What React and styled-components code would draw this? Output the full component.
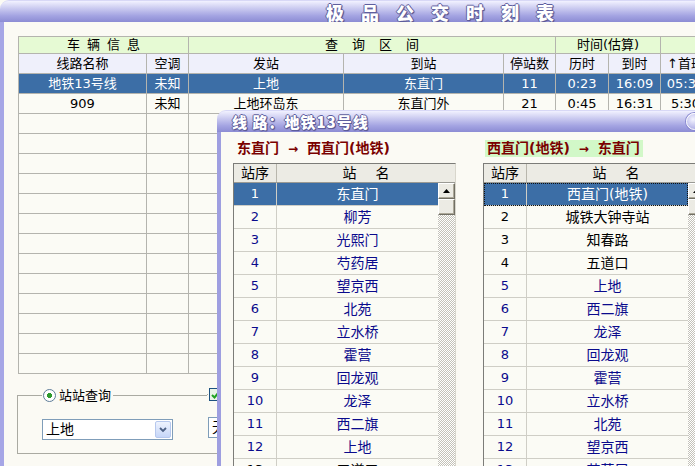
import React from "react";
import styled, { createGlobalStyle } from "styled-components";

const GlobalStyle = createGlobalStyle`
  html, body {
    margin: 0;
    padding: 0;
    overflow: hidden;
  }
  body {
    background: #fbfaf4;
    font-family: "DejaVu Sans", "Noto Sans CJK SC", sans-serif;
  }
`;

const FONT = `"DejaVu Sans", "Noto Sans CJK SC", sans-serif`;

// ---------- window chrome ----------

const Desktop = styled.div`
  position: relative;
  width: 695px;
  height: 466px;
  overflow: hidden;
`;

const MainWindow = styled.div`
  width: 880px;
  height: 466px;
  display: flex;
  flex-direction: column;
`;

const TitleBar = styled.div`
  flex: none;
  height: 22px;
  box-sizing: border-box;
  display: flex;
  align-items: center;
  justify-content: ${(p) => (p.$left ? "space-between" : "center")};
  padding: ${(p) => (p.$left ? "0 14px 0 15px" : "0")};
  border-radius: 9px 9px 0 0;
  border-top: 1px solid #d8d8f6;
  background: linear-gradient(#f2f2ff 0%, #d0d0f2 30%, #a4a4e2 70%, #8c8cd4 100%);
`;

const TitleText = styled.span`
  color: #fff;
  font-family: "Noto Sans CJK SC", sans-serif;
  font-weight: 900;
  font-size: ${(p) => p.$size}px;
  letter-spacing: ${(p) => p.$ls}px;
  margin-right: -${(p) => p.$ls}px;
  line-height: 1;
  white-space: pre;
  text-shadow: 1px 0 0 #5e5e9e, -1px 0 0 #5e5e9e, 0 1px 0 #5e5e9e,
    0 -1px 0 #5e5e9e, 1px 1px 1px #46467f;
`;

const CloseButton = styled.span`
  flex: none;
  width: 17px;
  height: 17px;
  border-radius: 50%;
  box-sizing: border-box;
  border: 1px solid #ffffff;
  background: radial-gradient(circle at 40% 35%, #f4f4ff, #b4b4e8 70%, #9494d4);
  box-shadow: 0 0 0 1px #8a8ad0;
`;

const MainBody = styled.div`
  flex: 1;
  border-left: 4px solid #a6a6e6;
  background: #fbfaf4;
  padding: 14px 0 0 14px;
`;

// ---------- main grid ----------

const Grid = styled.table`
  border-collapse: collapse;
  table-layout: fixed;
  width: 842px;
  border: 1px solid #6e6e6e;
  background: #fbfbf5;
  font-family: ${FONT};
  font-size: 13px;
`;

const Row = styled.tr`
  height: ${(p) => p.$h}px;
  background: ${(p) =>
    p.$kind === "group"
      ? "#e6fad4"
      : p.$kind === "names"
      ? "#eff0fb"
      : p.$sel
      ? "#3c6ea6"
      : "transparent"};
  color: ${(p) => (p.$sel ? "#ffffff" : "#000000")};
`;

const Cell = styled.td`
  border: 1px solid #b4b4ae;
  padding: 0;
  text-align: center;
  white-space: nowrap;
  overflow: hidden;
  line-height: 16px;
`;

const Spread = styled.span`
  letter-spacing: ${(p) => p.$ls}px;
  margin-right: -${(p) => p.$ls}px;
`;

// ---------- query group boxes ----------

const QueryRow = styled.div`
  display: flex;
  margin: 14px 0 0 -1px;
  font-family: ${FONT};
  font-size: 13px;
`;

const GroupBox = styled.fieldset`
  margin: 0;
  height: 66px;
  box-sizing: border-box;
  width: ${(p) => p.$w}px;
  padding: 0 0 0 ${(p) => p.$pad}px;
  border: 1px solid #aaaaa2;
  border-left-style: ${(p) => (p.$noLeft ? "none" : "solid")};
  border-right: none;
`;

const Legend = styled.legend`
  padding: 0 2px 0 1px;
  display: flex;
  align-items: center;
  gap: 3px;
  line-height: 15px;
`;

const Radio = styled.span`
  width: 13px;
  height: 13px;
  box-sizing: border-box;
  border-radius: 50%;
  border: 1px solid #5e7c99;
  background: radial-gradient(circle, #2f9a2f 0 2.4px, #ffffff 2.8px);
`;

const Check = styled.span`
  width: 13px;
  height: 13px;
  box-sizing: border-box;
  border: 1px solid #1c5180;
  background: #e9f4e6;
  display: flex;
  align-items: center;
  justify-content: center;
`;

const Combo = styled.div`
  margin-top: 16px;
  width: 131px;
  height: 21px;
  box-sizing: border-box;
  border: 1px solid #7f9db9;
  background: #ffffff;
  display: flex;
  align-items: center;
  justify-content: space-between;
  padding: 1px;
  font-size: 14px;
`;

const ComboText = styled.span`
  padding-left: 2px;
  line-height: 17px;
`;

const DropButton = styled.span`
  width: 16px;
  height: 17px;
  box-sizing: border-box;
  border: 1px solid #b6c8ee;
  border-radius: 2px;
  background: linear-gradient(#eef3fe, #c6d6f8);
  display: flex;
  align-items: center;
  justify-content: center;
`;

// ---------- route dialog ----------

const Dialog = styled.div`
  position: absolute;
  left: 217px;
  top: 110px;
  width: 500px;
  height: 370px;
  display: flex;
  flex-direction: column;
`;

const DialogBody = styled.div`
  flex: 1;
  border-left: 4px solid #9e9ee0;
  background: #fbfaf4;
  padding: 8px 0 0 12px;
  display: flex;
  gap: 27px;
  font-family: ${FONT};
`;

const Column = styled.div`
  display: flex;
  flex-direction: column;
`;

const DirLabel = styled.div`
  align-self: flex-start;
  height: 17px;
  line-height: 17px;
  margin: 0 0 6px 2px;
  padding: 0 3px 0 2px;
  background: ${(p) => (p.$hl ? "#d2f8c8" : "transparent")};
  color: #7a0000;
  font-weight: bold;
  font-size: 14px;
  white-space: nowrap;
`;

const Arrow = styled.span`
  margin: 0 9px;
  font-size: 12px;
`;

const ListBox = styled.div`
  width: 221px;
  border: 1px solid #7c7c78;
  border-right-color: #d8d6cc;
  background: #fbfbf5;
  font-size: 14px;
`;

const ListHead = styled.div`
  display: grid;
  grid-template-columns: 43px 1fr;
  height: 18px;
  background: #ecebe4;
  border-bottom: 1px solid #9a9a94;
  line-height: 18px;
  text-align: center;
  color: #000;
`;

const HeadCell = styled.div`
  border-right: 1px solid #b8b6ac;
`;

const ListBodyWrap = styled.div`
  display: flex;
`;

const Rows = styled.div`
  flex: 1;
`;

const StopRow = styled.div`
  display: grid;
  grid-template-columns: 43px 1fr;
  height: 23px;
  box-sizing: border-box;
  border-bottom: 1px solid #cfcec6;
  line-height: 22px;
  text-align: center;
  background: ${(p) => (p.$sel ? "#3c6ea6" : "transparent")};
  color: ${(p) => (p.$sel ? "#ffffff" : p.$hot ? "#0a0a8c" : "#000000")};
  outline: ${(p) => (p.$focus ? "1px dotted #111" : "none")};
  outline-offset: -1px;
`;

const NumCell = styled.div`
  border-right: 1px solid #cfcec6;
  font-size: 13px;
`;

const ScrollTrack = styled.div`
  flex: none;
  width: 17px;
  display: flex;
  flex-direction: column;
  background: repeating-conic-gradient(#ffffff 0 25%, #c4c2b8 0 50%) 0 0 / 2px 2px;
`;

const ScrollBtn = styled.div`
  height: 16px;
  box-sizing: border-box;
  background: #ecebe4;
  border: 1px solid;
  border-color: #ffffff #716f64 #716f64 #ffffff;
  box-shadow: inset -1px -1px #aca899;
  display: flex;
  align-items: center;
  justify-content: center;
`;

// ---------- data ----------

const cols = [128, 42, 155, 160, 52, 53, 52, 50, 150];

const lines = [
  { sel: true, cells: ["地铁13号线", "未知", "上地", "东直门", "11", "0:23", "16:09", "05:30", ""] },
  { sel: false, cells: ["909", "未知", "上地环岛东", "东直门外", "21", "0:45", "16:31", "5:30", ""] },
];

const colNames = ["线路名称", "空调", "发站", "到站", "停站数", "历时", "到时", "↑首班", ""];

const westbound = ["东直门", "柳芳", "光熙门", "芍药居", "望京西", "北苑", "立水桥", "霍营", "回龙观", "龙泽", "西二旗", "上地", "五道口"];
const eastbound = ["西直门(地铁)", "城铁大钟寺站", "知春路", "五道口", "上地", "西二旗", "龙泽", "回龙观", "霍营", "立水桥", "北苑", "望京西", "芍药居"];

const UpArrow = () => (
  <svg width="7" height="4" viewBox="0 0 7 4">
    <polygon points="3.5,0 7,4 0,4" fill="#000" />
  </svg>
);

const Chevron = () => (
  <svg width="8" height="6" viewBox="0 0 8 6">
    <polyline points="1,1 4,4 7,1" fill="none" stroke="#4d6185" strokeWidth="1.8" />
  </svg>
);

const StopList = ({ stops, hotFrom, hotTo, focus }) => (
  <ListBox>
    <ListHead>
      <HeadCell>站序</HeadCell>
      <div>
        <Spread $ls={19}>站名</Spread>
      </div>
    </ListHead>
    <ListBodyWrap>
      <Rows>
        {stops.map((name, i) => (
          <StopRow key={name} $sel={i === 0} $focus={focus && i === 0} $hot={i >= hotFrom && i <= hotTo}>
            <NumCell>{i + 1}</NumCell>
            <div>{name}</div>
          </StopRow>
        ))}
      </Rows>
      <ScrollTrack>
        <ScrollBtn>
          <UpArrow />
        </ScrollBtn>
        <ScrollBtn />
      </ScrollTrack>
    </ListBodyWrap>
  </ListBox>
);

export default function App() {
  return (
    <Desktop>
      <GlobalStyle />
      <MainWindow>
        <TitleBar>
          <TitleText $size={18} $ls={17}>极品公交时刻表</TitleText>
        </TitleBar>
        <MainBody>
          <Grid>
            <colgroup>
              {cols.map((w, i) => (
                <col key={i} style={{ width: w }} />
              ))}
            </colgroup>
            <tbody>
              <Row $kind="group" $h={17}>
                <Cell colSpan={2}>
                  <Spread $ls={7}>车辆信息</Spread>
                </Cell>
                <Cell colSpan={3}>
                  <Spread $ls={14}>查询区间</Spread>
                </Cell>
                <Cell colSpan={2}>时间(估算)</Cell>
                <Cell colSpan={2} />
              </Row>
              <Row $kind="names" $h={20}>
                {colNames.map((n, i) => (
                  <Cell key={i}>{n}</Cell>
                ))}
              </Row>
              {lines.map((l, r) => (
                <Row key={r} $sel={l.sel} $h={20}>
                  {l.cells.map((c, i) => (
                    <Cell key={i}>{c}</Cell>
                  ))}
                </Row>
              ))}
              {Array.from({ length: 13 }).map((_, r) => (
                <Row key={"e" + r} $h={20}>
                  {cols.map((_, i) => (
                    <Cell key={i} />
                  ))}
                </Row>
              ))}
            </tbody>
          </Grid>

          <QueryRow>
            <GroupBox $w={190} $pad={24}>
              <Legend>
                <Radio />
                站站查询
              </Legend>
              <Combo>
                <ComboText>上地</ComboText>
                <DropButton>
                  <Chevron />
                </DropButton>
              </Combo>
            </GroupBox>
            <GroupBox $w={300} $pad={1} $noLeft>
              <Legend>
                <Check>
                  <svg width="9" height="8" viewBox="0 0 9 8">
                    <polyline points="1,4 3.5,6.5 8,1" fill="none" stroke="#21a121" strokeWidth="2" />
                  </svg>
                </Check>
              </Legend>
              <Combo>
                <ComboText>无</ComboText>
              </Combo>
            </GroupBox>
          </QueryRow>
        </MainBody>
      </MainWindow>

      <Dialog>
        <TitleBar $left>
          <TitleText $size={15} $ls={1}>线 路：地铁13号线</TitleText>
          <CloseButton />
        </TitleBar>
        <DialogBody>
          <Column>
            <DirLabel>
              东直门<Arrow>→</Arrow>西直门(地铁)
            </DirLabel>
            <StopList stops={westbound} hotFrom={0} hotTo={11} />
          </Column>
          <Column>
            <DirLabel $hl>
              西直门(地铁)<Arrow>→</Arrow>东直门
            </DirLabel>
            <StopList stops={eastbound} hotFrom={4} hotTo={12} focus />
          </Column>
        </DialogBody>
      </Dialog>
    </Desktop>
  );
}
